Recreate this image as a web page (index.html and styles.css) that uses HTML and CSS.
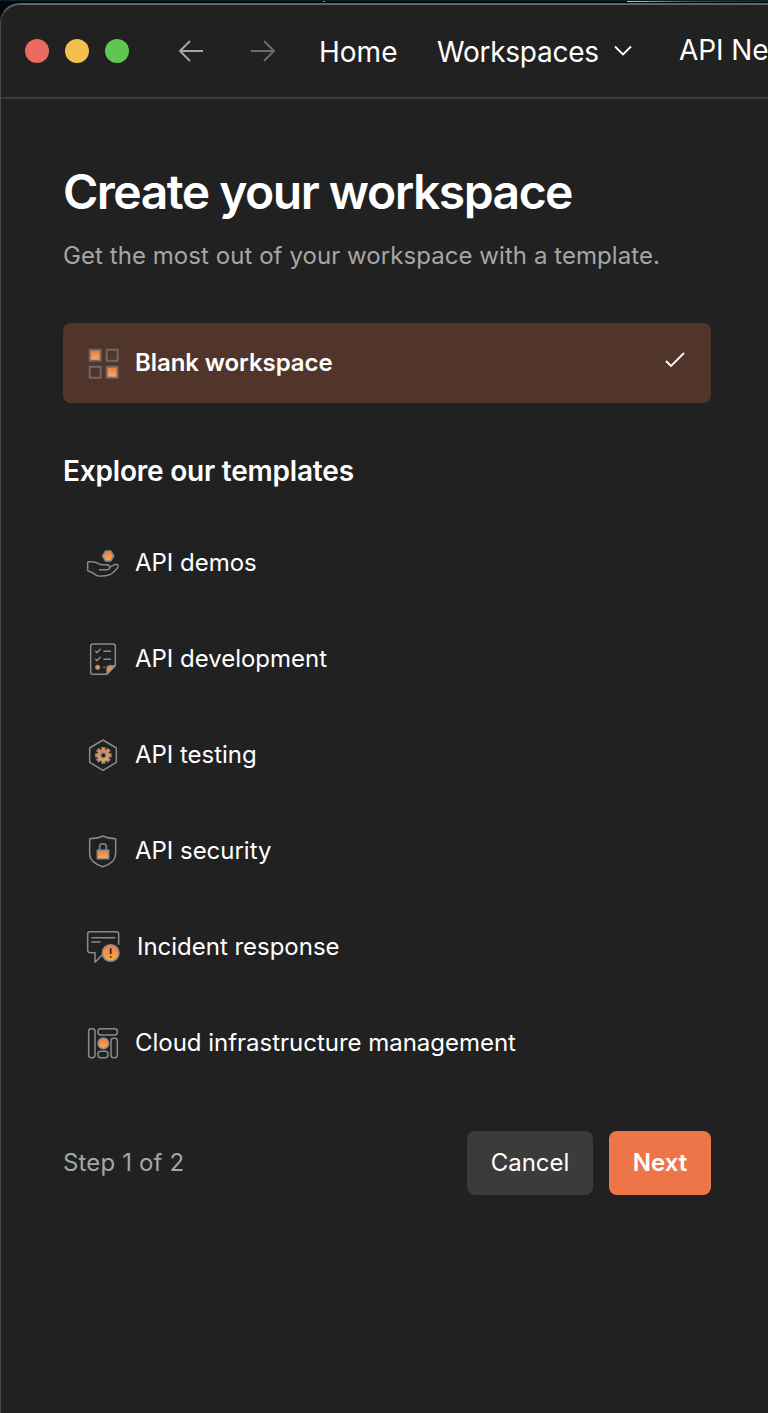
FILE: index.html
```html
<!DOCTYPE html>
<html lang="en">
<head>
<meta charset="utf-8">
<title>Create your workspace</title>
<link rel="stylesheet" href="styles.css">
</head>
<body>
<svg class="defs" width="0" height="0"><defs><linearGradient id="glow" x1="0" y1="0" x2="0" y2="1"><stop offset="0" stop-color="#f87848"/><stop offset="1" stop-color="#f6ab48"/></linearGradient><linearGradient id="tile" x1="0" y1="0" x2="0" y2="1"><stop offset="0" stop-color="#f17344"/><stop offset="1" stop-color="#f3b067"/></linearGradient></defs></svg>
<div class="backdrop"><span class="backdrop-dot"></span><span class="backdrop-streak"></span></div>
<div class="window">
<header class="bar">
  <div class="lights"><i class="light red"></i><i class="light yellow"></i><i class="light green"></i></div>
  <svg class="arrow back" viewBox="0 0 26 24"><path d="M25 12H2M12 2L2 12l10 10"/></svg>
  <svg class="arrow forward" viewBox="0 0 26 24"><path d="M1 12h23M14 2l10 10-10 10"/></svg>
  <a class="nav home">Home</a>
  <a class="nav spaces">Workspaces</a>
  <svg class="chevron" viewBox="0 0 20 12"><path d="M2 1.5l8 8 8-8"/></svg>
  <a class="nav network">API Ne</a>
</header>
<main class="content">
  <h1 class="title">Create your workspace</h1>
  <p class="subtitle">Get the most out of your workspace with a template.</p>
  <div class="option selected">
    <svg class="icon tiles" viewBox="29 29 108 108"><g class="line"><rect x="43" y="43" width="33" height="33" fill="url(#tile)"/><rect x="94" y="43" width="33" height="33"/><rect x="43" y="94" width="33" height="33"/><rect x="94" y="94" width="33" height="33" fill="url(#tile)"/></g></svg>
    <span class="label strong">Blank workspace</span>
    <svg class="check" viewBox="0 0 22 18"><path d="M2 10l5 5L20 2"/></svg>
  </div>
  <h2 class="section">Explore our templates</h2>
  <div class="list">
    <div class="option">
      <svg class="icon" viewBox="30 29 108 108"><path class="line" fill="url(#glow)" d="M92 47h15l9 15-9 15H92l-9-15z"/><path class="line" d="M38 79V107M38 79h14c13 0 19 8 28 9h16c10 0 11 15 0 15H72M103 95c7-1 11-6 15-7 9-3 14 2 10 9l-13 14c-5 5-10 8-17 9-14 2-24 5-34 0-8-4-13-13-26-13"/></svg>
      <span class="label">API demos</span>
    </div>
    <div class="option">
      <svg class="icon" viewBox="30 32 108 108"><path fill="url(#glow)" d="M96 132v-16q0-10 10-10h15z"/><path class="line" d="M121 106V48q0-7-7-7H54q-7 0-7 7v77q0 7 7 7h42l25-26h-15q-10 0-10 10v16M61 61l5 6 11-12M61 85l5 6 11-12M85 63h23M85 87h23M85 111h5"/><circle class="line thin" cx="68" cy="111" r="6.5" fill="#f88950"/></svg>
      <span class="label">API development</span>
    </div>
    <div class="option">
      <svg class="icon" viewBox="30 35 108 108"><path class="line" d="M84 44l40 24v43l-40 24-40-24V68z"/><g transform="translate(85 90)"><path class="teeth-edge" d="M0-25V25M-25 0H25M-18-18L18 18M-18 18L18-18"/><path class="teeth" d="M0-21V21M-21 0H21M-15-15L15 15M-15 15L15-15"/><circle r="17" fill="url(#glow)"/><circle class="line" r="8" fill="#212121"/></g></svg>
      <span class="label">API testing</span>
    </div>
    <div class="option">
      <svg class="icon" viewBox="30 38 108 108"><path class="line" d="M44 55q26-1 40-8 14 7 38 8v45c0 21-17 32-38 39-22-7-40-18-40-39z"/><path class="line" d="M74 90V79c0-12 20-12 20 0v11"/><rect class="line" x="67" y="90" width="34" height="25" fill="url(#glow)"/></svg>
      <span class="label">API security</span>
    </div>
    <div class="option">
      <svg class="icon" viewBox="30 41 108 108"><path class="line" d="M131 88V56q0-7-7-7H45q-7 0-7 7v48q0 8 8 8h14v29l22-23M49 67h72M49 80h28"/><circle class="line" cx="107" cy="113" r="25" fill="url(#glow)"/><path class="mark" d="M107 99v17m0 7v4"/></svg>
      <span class="label incident">Incident response</span>
    </div>
    <div class="option">
      <svg class="icon" viewBox="30 38 108 108"><g class="line"><rect x="41" y="49" width="19" height="87" rx="8"/><rect x="69" y="49" width="58" height="19" rx="8"/><rect x="108" y="78" width="19" height="58" rx="8"/><rect x="69" y="117" width="30" height="19" rx="8"/><circle cx="85" cy="93" r="16" fill="url(#glow)"/></g></svg>
      <span class="label">Cloud infrastructure management</span>
    </div>
  </div>
  <footer class="footer">
    <span class="step">Step 1 of 2</span>
    <button class="button cancel">Cancel</button>
    <button class="button next">Next</button>
  </footer>
</main>
</div>
</body>
</html>
```
FILE: styles.css
```css
* { box-sizing: border-box; }
body { margin: 0; height: 1413px; overflow: hidden; background: #02090c; font-family: Inter, "Liberation Sans", sans-serif; color: #fff; }
.defs { display: block; height: 0; }
.backdrop { height: 3px; display: flex; justify-content: space-between; padding-left: 323px; background: linear-gradient(#0a222d 1px, #000 2px); }
.backdrop-dot { width: 2px; height: 1px; margin-top: 1px; background: #6b9694; }
.backdrop-streak { width: 141px; height: 1px; margin-top: 1px; background: linear-gradient(90deg, #b9c9d4, #1d566a 45%, #0d2632); }
.window { height: 1410px; width: 100%; background: #212121; border-top: 2px solid #636363; border-left: 1px solid #4b4b4b; border-top-left-radius: 20px; }
.bar { height: 94px; display: flex; align-items: center; padding-left: 24px; border-bottom: 2px solid #3c3c3c; white-space: nowrap; overflow: hidden; }
.bar > * { flex: none; }
.lights { display: flex; gap: 16px; width: 153px; }
.light { width: 24px; height: 24px; border-radius: 50%; }
.red { background: #ed6a5f; }
.yellow { background: #f5bf4f; }
.green { background: #61c554; }
.arrow { width: 26px; height: 24px; fill: none; stroke-width: 2; }
.back { stroke: #a6a6a6; margin-right: 46px; }
.forward { stroke: #6b6b6b; margin-right: 43px; }
.nav { font-size: 28px; line-height: 34px; letter-spacing: -.1px; padding-top: 1px; }
.home { width: 118px; letter-spacing: 0; }
.spaces { width: 176px; letter-spacing: -.25px; }
.chevron { width: 20px; height: 12px; fill: none; stroke: #fff; stroke-width: 1.8; margin-right: 46px; }
.network { padding: 0 0 2px; }
.content { width: 710px; padding: 63px 0 0 62px; }
.title { margin: 0; font-size: 48px; line-height: 60px; font-weight: 600; letter-spacing: -1.5px; }
.subtitle { margin: 18px 0 0; font-size: 24px; line-height: 32px; color: #a6a6a6; letter-spacing: .06px; white-space: nowrap; }
.option { height: 96px; display: flex; align-items: center; padding: 0 22px; white-space: nowrap; }
.selected { height: 80px; margin-top: 51px; background: #51352b; border-radius: 8px; }
.icon { width: 36px; height: 36px; margin-right: 14px; flex: none; fill: none; }
.line { stroke: #8a8a8a; stroke-width: 4.5; stroke-linejoin: round; }
.tiles .line { stroke: #6e6966; stroke-width: 6; }
.thin { stroke-width: 3; }
.teeth-edge { stroke: #858585; stroke-width: 13; }
.teeth { stroke: #f89349; stroke-width: 7; }
.mark { stroke: #292321; stroke-width: 5; }
.label { font-size: 24px; line-height: 32px; letter-spacing: -.02px; }
.incident { padding-left: 2px; }
.strong { font-weight: 600; letter-spacing: -.07px; }
.check { width: 22px; height: 18px; margin: 0 3px 7px auto; fill: none; stroke: #fff; stroke-width: 1.8; }
.section { margin: 50px 0 26px; font-size: 28px; line-height: 36px; font-weight: 600; letter-spacing: -.2px; }
.footer { display: flex; align-items: center; margin-top: 40px; height: 64px; }
.step { flex: 1; font-size: 24px; letter-spacing: .15px; color: #a6a6a6; padding-bottom: 2px; }
.button { height: 64px; border: 0; padding: 0 0 2px; border-radius: 8px; font: 400 24px Inter, sans-serif; color: #fff; }
.cancel { width: 126px; margin-right: 16px; background: #3b3b3b; }
.next { width: 102px; background: #ee7548; font-weight: 600; }
```
